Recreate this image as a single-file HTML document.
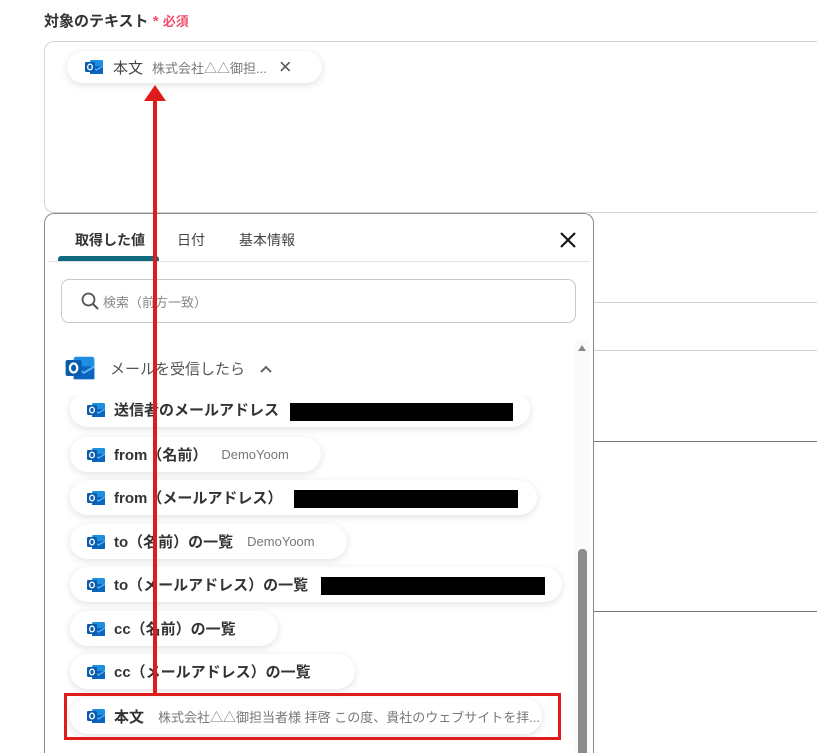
<!DOCTYPE html>
<html style="width:817px;height:753px;overflow:hidden"><head><meta charset="utf-8"><style>
*{box-sizing:border-box;margin:0;padding:0}
body{width:817px;height:753px;overflow:hidden;background:#fff;font-family:"Liberation Sans","Noto Sans CJK JP",sans-serif;position:relative;color:#333}
.abs{position:absolute}
.chip{position:absolute;left:70px;height:35px;border-radius:18px;background:#fff;box-shadow:0 2px 8px rgba(0,0,0,.12);display:flex;align-items:center;padding-left:16px;font-size:15px;font-weight:bold;color:#333;white-space:nowrap}
.chip svg{margin-right:8px;flex:none}
.sub{font-weight:normal;color:#777;font-size:13px;margin-left:14px}
.hl{position:absolute;left:593px;right:0;height:1px;background:#d0d4d8}
.bk{position:absolute;background:#000;height:18px}
</style></head><body>
<svg width="0" height="0" style="position:absolute"><defs><symbol id="ol" viewBox="0 0 20 20"><rect x="6" y="3" width="13" height="14" rx="1.5" fill="#1e8fe0"/><path d="M6 9 L19 9 L19 17 L6 17Z" fill="#0a64c0"/><path d="M6 9 L12.5 13 L19 9" fill="none" stroke="#5bb7f5" stroke-width="1.2"/><rect x="1" y="5" width="10" height="10" rx="1.2" fill="#0b5cad"/><ellipse cx="6" cy="10" rx="2.3" ry="2.8" fill="none" stroke="#fff" stroke-width="1.4"/></symbol></defs></svg>

<div class="abs" style="left:44px;top:10px;font-size:15px;font-weight:bold;color:#333">対象のテキスト <span style="color:#f0506e">* </span><span style="color:#f0506e;font-size:13px">必須</span></div>
<div class="abs" style="left:44px;top:41px;width:773px;height:172px;border:1px solid #d0d4d8;border-right:none;border-radius:10px 0 0 10px"></div>
<div class="abs" style="left:67px;top:51px;width:255px;height:32px;border-radius:16px;background:#fff;box-shadow:0 2px 8px rgba(0,0,0,.12);display:flex;align-items:center;padding-left:17px;white-space:nowrap">
<svg width="20" height="20"><use href="#ol"/></svg><span style="margin-left:9px;font-size:15px;color:#444">本文</span><span style="margin-left:9px;font-size:13px;color:#777">株式会社△△御担...</span><span style="margin-left:12px;font-size:22px;color:#555;font-weight:300">×</span></div>

<div class="hl" style="top:302px"></div>
<div class="hl" style="top:350px"></div>
<div class="hl" style="top:441px;background:#777"></div>
<div class="hl" style="top:611px;background:#777"></div>

<div class="abs" style="left:44px;top:213px;width:550px;height:540px;border:1px solid #888;border-bottom:none;border-radius:10px 10px 0 0;background:#fff"></div>
<div class="abs" style="left:75px;top:230px;font-size:14px;font-weight:bold;color:#333">取得した値</div>
<div class="abs" style="left:177px;top:230px;font-size:14px;color:#444">日付</div>
<div class="abs" style="left:239px;top:230px;font-size:14px;color:#444">基本情報</div>
<div class="abs" style="left:58px;top:256px;width:101px;height:5px;background:#0d6a80;border-radius:3px 3px 0 0"></div>
<div class="abs" style="left:48px;top:261px;width:542px;height:1px;background:#e2e2e2"></div>
<svg class="abs" style="left:559px;top:231px" width="18" height="18"><path d="M2 2L16 16M16 2L2 16" stroke="#111" stroke-width="2"/></svg>
<div class="abs" style="left:61px;top:279px;width:515px;height:44px;border:1px solid #c8c8c8;border-radius:8px"></div>
<svg class="abs" style="left:80px;top:291px" width="20" height="20"><circle cx="8.5" cy="8.5" r="6" fill="none" stroke="#555" stroke-width="1.8"/><path d="M13 13L18 18" stroke="#555" stroke-width="2"/></svg>
<div class="abs" style="left:103px;top:292px;font-size:13px;color:#888">検索（前方一致）</div>

<div class="abs" style="left:575px;top:340px;width:15px;height:413px;background:#fafafa"></div>
<svg class="abs" style="left:577px;top:344px" width="10" height="8"><path d="M1 7L5 1L9 7Z" fill="#888"/></svg>
<div class="abs" style="left:578px;top:549px;width:9px;height:204px;background:#8c8c8c;border-radius:4px 4px 0 0"></div>

<svg class="abs" style="left:64px;top:352px" width="32" height="32"><use href="#ol"/></svg>
<div class="abs" style="left:110px;top:358px;font-size:15px;color:#555">メールを受信したら</div>
<svg class="abs" style="left:259px;top:364px" width="14" height="10"><path d="M2 8L7 3L12 8" fill="none" stroke="#666" stroke-width="2"/></svg>

<div class="abs" style="left:46px;top:395px;width:528px;height:358px;overflow:hidden">
<div class="chip" style="left:24px;top:-3px;width:460px"><svg width="20" height="20"><use href="#ol"/></svg>送信者のメールアドレス</div>
<div class="chip" style="left:24px;top:42px;width:251px"><svg width="20" height="20"><use href="#ol"/></svg>from（名前）<span class="sub">DemoYoom</span></div>
<div class="chip" style="left:24px;top:85px;width:467px"><svg width="20" height="20"><use href="#ol"/></svg>from（メールアドレス）</div>
<div class="chip" style="left:24px;top:129px;width:277px"><svg width="20" height="20"><use href="#ol"/></svg>to（名前）の一覧<span class="sub">DemoYoom</span></div>
<div class="chip" style="left:24px;top:172px;width:492px"><svg width="20" height="20"><use href="#ol"/></svg>to（メールアドレス）の一覧</div>
<div class="chip" style="left:24px;top:216px;width:208px"><svg width="20" height="20"><use href="#ol"/></svg>cc（名前）の一覧</div>
<div class="chip" style="left:24px;top:259px;width:285px"><svg width="20" height="20"><use href="#ol"/></svg>cc（メールアドレス）の一覧</div>
<div class="chip" style="left:24px;top:303px;width:472px;height:36px"><svg width="20" height="20"><use href="#ol"/></svg>本文<span class="sub">株式会社△△御担当者様 拝啓 この度、貴社のウェブサイトを拝...</span></div>
</div>
<div class="bk" style="left:290px;top:403px;width:223px"></div>
<div class="bk" style="left:294px;top:490px;width:224px"></div>
<div class="bk" style="left:321px;top:577px;width:224px"></div>

<div class="abs" style="left:64px;top:693px;width:497px;height:47px;border:3px solid #e01b1b"></div>
<div class="abs" style="left:153px;top:100px;width:4px;height:594px;background:#e01b1b"></div>
<svg class="abs" style="left:143px;top:84px" width="24" height="18"><path d="M12 1L23 17L1 17Z" fill="#e01b1b"/></svg>
</body></html>
